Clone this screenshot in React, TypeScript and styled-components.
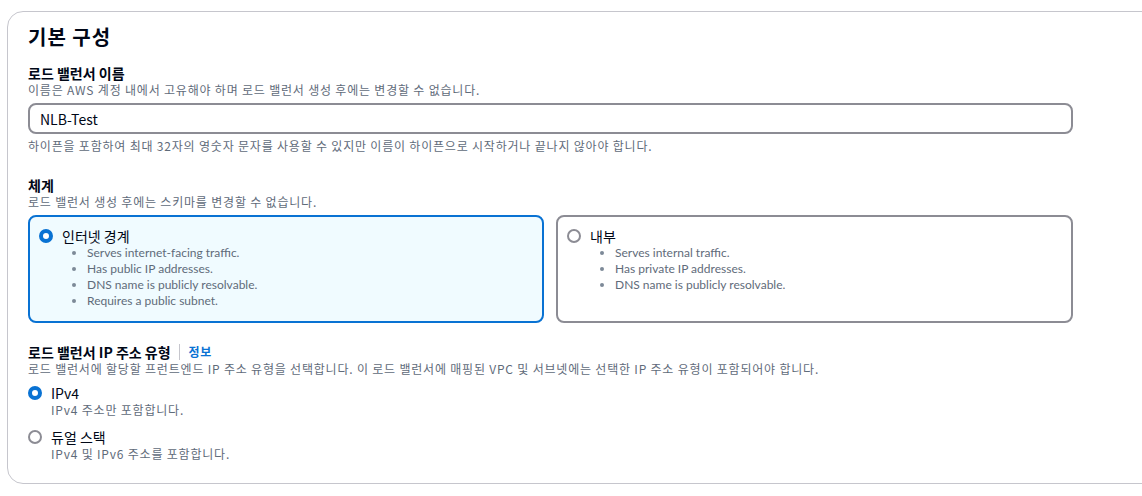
import React from "react";
import styled, { createGlobalStyle } from "styled-components";

const schemes = [
    {
        key: "internet",
        label: "인터넷 경계",
        selected: true,
        items: [
            "Serves internet-facing traffic.",
            "Has public IP addresses.",
            "DNS name is publicly resolvable.",
            "Requires a public subnet.",
        ],
    },
    {
        key: "internal",
        label: "내부",
        selected: false,
        items: ["Serves internal traffic.", "Has private IP addresses.", "DNS name is publicly resolvable."],
    },
];

const ipTypes = [
    { key: "ipv4", label: "IPv4", desc: "IPv4 주소만 포함합니다.", selected: true },
    { key: "dual", label: "듀얼 스택", desc: "IPv4 및 IPv6 주소를 포함합니다.", selected: false },
];

const App: React.FC = () => {
    return (
        <>
            <GlobalStyle />
            <Page>
                <Card>
                    <Title>기본 구성</Title>

                    <Field>
                        <Label>로드 밸런서 이름</Label>
                        <Description>이름은 AWS 계정 내에서 고유해야 하며 로드 밸런서 생성 후에는 변경할 수 없습니다.</Description>
                        <Input defaultValue="NLB-Test" />
                        <Hint>하이픈을 포함하여 최대 32자의 영숫자 문자를 사용할 수 있지만 이름이 하이픈으로 시작하거나 끝나지 않아야 합니다.</Hint>
                    </Field>

                    <Field $gap={22}>
                        <Label>체계</Label>
                        <Description>로드 밸런서 생성 후에는 스키마를 변경할 수 없습니다.</Description>
                        <Tiles>
                            {schemes.map((s) => (
                                <Tile key={s.key} $selected={s.selected}>
                                    <RadioRow>
                                        <Radio $selected={s.selected} />
                                        <RadioLabel>{s.label}</RadioLabel>
                                    </RadioRow>
                                    <Bullets>
                                        {s.items.map((item) => (
                                            <li key={item}>{item}</li>
                                        ))}
                                    </Bullets>
                                </Tile>
                            ))}
                        </Tiles>
                    </Field>

                    <Field $gap={20}>
                        <LabelRow>
                            <Label>로드 밸런서 IP 주소 유형</Label>
                            <Divider />
                            <InfoLink href="#">정보</InfoLink>
                        </LabelRow>
                        <Description>
                            로드 밸런서에 할당할 프런트엔드 IP 주소 유형을 선택합니다. 이 로드 밸런서에 매핑된 VPC 및 서브넷에는 선택한 IP 주소 유형이 포함되어야 합니다.
                        </Description>
                        <RadioGroup>
                            {ipTypes.map((t) => (
                                <RadioOption key={t.key}>
                                    <RadioRow>
                                        <Radio $selected={t.selected} />
                                        <RadioLabel>{t.label}</RadioLabel>
                                    </RadioRow>
                                    <OptionDesc>{t.desc}</OptionDesc>
                                </RadioOption>
                            ))}
                        </RadioGroup>
                    </Field>
                </Card>
            </Page>
        </>
    );
};

export default App;

/* ~~~~~~ -- styling -- ~~~~~~ */

const GlobalStyle = createGlobalStyle`
    html, body {
        margin: 0;
        padding: 0;
        background: #ffffff;
        overflow: hidden;
    }
    body {
        font-family: "Noto Sans CJK KR", "Noto Sans", sans-serif;
        color: #000716;
    }
`;

const Page = styled.div`
    padding: 11px 0 0 7px;
    width: 1142px;
    height: 496px;
    box-sizing: border-box;
    overflow: hidden;
`;

const Card = styled.div`
    width: 1160px;
    box-sizing: border-box;
    border: 1px solid #c6c6cd;
    border-radius: 16px;
    padding: 13px 20px 21px 20px;
    background: #ffffff;
`;

const Title = styled.h2`
    margin: 0;
    font-size: 20px;
    line-height: 24px;
    font-weight: 700;
    letter-spacing: 1px;
    color: #000716;
`;

const Field = styled.div<{ $gap?: number }>`
    display: flex;
    flex-direction: column;
    margin-top: ${(p) => p.$gap ?? 15}px;
`;

const Label = styled.div`
    font-size: 14px;
    line-height: 18px;
    font-weight: 700;
    color: #000716;
`;

const LabelRow = styled.div`
    display: flex;
    align-items: center;
`;

const Divider = styled.span`
    width: 1px;
    height: 16px;
    background: #c6c6cd;
    margin: 0 9px 0 8px;
`;

const InfoLink = styled.a`
    font-size: 12px;
    line-height: 18px;
    font-weight: 700;
    letter-spacing: 0.5px;
    color: #0972d3;
    text-decoration: none;
`;

const Description = styled.div`
    font-size: 12px;
    line-height: 16px;
    letter-spacing: 0.8px;
    color: #5f6b7a;
`;

const Input = styled.input`
    margin-top: 5px;
    width: 1045px;
    height: 31px;
    box-sizing: border-box;
    border: 2px solid #8c8c94;
    border-radius: 8px;
    padding: 0 10px;
    font-family: "Noto Sans CJK KR", "Noto Sans", sans-serif;
    font-size: 14px;
    color: #000716;
    outline: none;
`;

const Hint = styled(Description)`
    margin-top: 4px;
`;

const Tiles = styled.div`
    margin-top: 5px;
    display: grid;
    grid-template-columns: 516px 517px;
    column-gap: 12px;
`;

const Tile = styled.div<{ $selected: boolean }>`
    height: 108px;
    box-sizing: border-box;
    border: 2px solid ${(p) => (p.$selected ? "#0972d3" : "#8c8c94")};
    background: ${(p) => (p.$selected ? "#f0fbff" : "#ffffff")};
    border-radius: 8px;
    padding: 10px 12px 10px 9px;
`;

const RadioRow = styled.div`
    display: flex;
    align-items: center;
    gap: 9px;
`;

const Radio = styled.span<{ $selected: boolean }>`
    width: 14px;
    height: 14px;
    box-sizing: border-box;
    border-radius: 50%;
    flex-shrink: 0;
    background: #ffffff;
    border: ${(p) => (p.$selected ? "4px solid #0972d3" : "2px solid #8c8c94")};
`;

const RadioLabel = styled.span`
    font-size: 14px;
    line-height: 18px;
    color: #000716;
`;

const Bullets = styled.ul`
    margin: 0;
    padding: 0 0 0 48px;
    font-family: Lato, "Noto Sans CJK KR", sans-serif;
    font-size: 12px;
    line-height: 16px;
    color: #5f6b7a;

    li {
        height: 16px;
    }

    li::marker {
        color: #7d8998;
    }
`;

const RadioGroup = styled.div`
    display: flex;
    flex-direction: column;
    gap: 10px;
    margin-top: 7px;
`;

const RadioOption = styled.div`
    display: flex;
    flex-direction: column;
`;

const OptionDesc = styled(Description)`
    padding-left: 23px;
`;
